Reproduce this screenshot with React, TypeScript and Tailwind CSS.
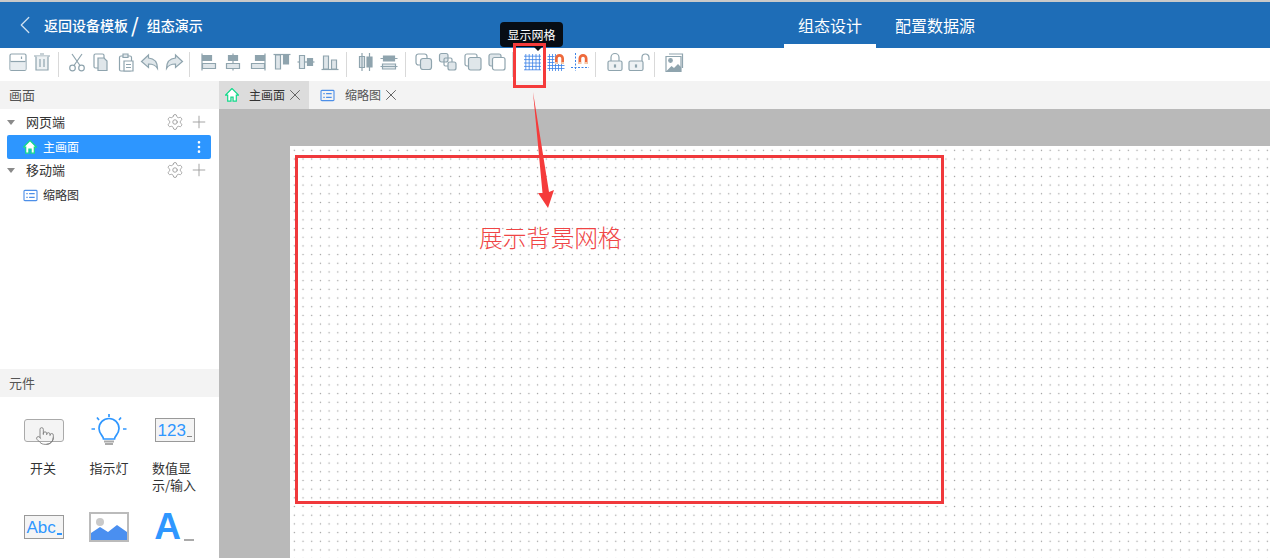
import { ChevronLeft, MoreVertical, Plus, Pointer, Settings, X } from 'lucide-react';
import type { ReactNode } from 'react';

const LINE = '#8fa4ae';
const FILL = '#dfe6ea';
const BLUE = '#3b82e6';

function Ico({ children }: { children: ReactNode }) {
  return (
    <svg viewBox="0 0 24 24" width="24" height="24" fill="none" stroke={LINE} strokeWidth="1.2">
      {children}
    </svg>
  );
}

const tools: Record<string, ReactNode> = {
  save: <><rect x="4" y="4" width="16" height="16.500" rx="1.500" fill="#fff" /><path d="M4.500 11.500h15v8.500h-15z" fill="#e8edf0" stroke="none" /><path d="M4.500 11.500h15" /><path d="M15.500 6.500v2.500" /></>,
  trash: <><path d="M4 6h16M10 4h4" /><path d="M6 6.500v13.500h12v-13.500" fill="#eef2f4" /><path d="M10 9v8M14 9v8" /></>,
  cut: <><circle cx="7.500" cy="18" r="2.800" /><circle cx="16.500" cy="18" r="2.800" /><path d="M9 15.500L17 4M15 15.500L7 4" /></>,
  copy: <><rect x="5" y="4" width="10" height="14" rx="1.500" fill="#fff" /><path d="M9 8h6l3 3v9.500H9z" fill={FILL} /></>,
  paste: <><rect x="5.500" y="6" width="12" height="15" rx="1.500" fill="#fff" /><path d="M9 4h5v3.500H9z" fill={FILL} /><path d="M10 11h9v10h-9z" fill="#fff" /><path d="M12 14.500h5M12 17.500h5" /></>,
  undo: <path d="M10.500 5L3.500 11.500l7 6v-3.500c4 0 7 1 9 4.500 0-6-3-10-9-10.500z" fill={FILL} />,
  redo: <path d="M13.500 5l7 6.500-7 6v-3.500c-4 0-7 1-9 4.500 0-6 3-10 9-10.500z" fill={FILL} />,
  alignL: <><path d="M5 3.500v17" /><path d="M5.500 5.500h9v5h-9z" fill={LINE} /><path d="M5.500 13.500h13v5h-13z" fill={FILL} /></>,
  alignC: <><path d="M12 3.500v17" /><path d="M7.500 5.500h9v5h-9z" fill={LINE} /><path d="M5.500 13.500h13v5h-13z" fill={FILL} /></>,
  alignR: <><path d="M19 3.500v17" /><path d="M9.500 5.500h9v5h-9z" fill={LINE} /><path d="M5.500 13.500h13v5h-13z" fill={FILL} /></>,
  top: <><path d="M3.500 4.500h17" /><path d="M5.500 5v14h5V5z" fill={FILL} /><path d="M13.500 5v9h5V5z" fill={LINE} /></>,
  midV: <><path d="M3.500 12h17" /><path d="M5.500 5.500v13h5v-13z" fill={FILL} /><path d="M13.500 8.500v7h5v-7z" fill={LINE} /></>,
  bottom: <><path d="M3.500 19.500h17" /><path d="M5.500 6v13h5V6z" fill={FILL} /><path d="M13.500 10v9h5v-9z" fill={FILL} /></>,
  distH: <><path d="M6.500 6.500v11h5v-11z" fill={FILL} /><path d="M14 7v10h5V7z" fill={LINE} /><path d="M9 3v18M16.500 3v18" /></>,
  distV: <><path d="M6.500 6h11v5h-11z" fill={LINE} /><path d="M5.500 14h13v5h-13z" fill={FILL} /><path d="M3.500 8.500h17M3.500 16.500h17" /></>,
  front: <><rect x="4" y="4" width="11" height="11" rx="2.500" /><rect x="8.500" y="8.500" width="11" height="11" rx="2.500" fill={FILL} /></>,
  back: <><rect x="3.500" y="3.500" width="8.500" height="8.500" rx="2" fill={FILL} /><rect x="8" y="8" width="8" height="8" rx="1.500" /><rect x="12" y="12" width="8" height="8" rx="2" fill={FILL} /></>,
  up: <><rect x="4" y="4" width="12" height="12" rx="2" /><rect x="7.500" y="7.500" width="12.500" height="12.500" rx="2" fill={FILL} /></>,
  down: <><rect x="4" y="4" width="12" height="12" rx="2" fill={FILL} /><rect x="7.500" y="7.500" width="12.500" height="12.500" rx="2" fill="#fff" /></>,
  lock: <><path d="M8 11V7.500a4 4 0 018 0V11" /><rect x="5" y="11" width="14" height="9.500" rx="1.500" fill="#eef2f4" /><path d="M11.500 15h1v2h-1z" fill={LINE} /></>,
  unlock: <><path d="M15 11V7.500a3.500 3.500 0 017 0V10" /><rect x="2" y="11" width="14" height="9.500" rx="1.500" fill="#eef2f4" /><path d="M8.500 15h1v2h-1z" fill={LINE} /></>,
  image: <><path d="M7 4h13.500v14" /><path d="M4 6.500h15v15H4z" fill="#fff" /><circle cx="8.500" cy="10.500" r="1.800" fill={LINE} /><path d="M4.500 21l5-5 2.500 2 4-4 3 3v4z" fill={LINE} stroke="none" /></>,
};

function GridIcon() {
  return (
    <svg viewBox="0 0 24 24" width="24" height="24" fill="none" stroke={BLUE} strokeWidth="0.800">
      <path d="M5.800 4v16M9.200 4v16M12.600 4v16M16 4v16M19.400 4v16M4 6.200h17M4 9.600h17M4 13h17M4 16.400h17M4 19.800h17" />
    </svg>
  );
}

function GridMagnet() {
  return (
    <svg viewBox="0 0 24 24" width="24" height="24" fill="none">
      <path d="M5.500 4v17M8.500 4v17M11.500 4v17M14.500 14v7M17.500 14v7M3.500 6.500h7M3.500 9.500h7M3.500 12.500h7M3.500 15.500h17M3.500 18.500h17" stroke={BLUE} strokeWidth="0.800" />
      <path d="M11 14V8.500a4.500 4.500 0 019 0V14h-2.700V8.500a1.800 1.800 0 00-3.600 0V14z" fill="#ee6a3c" />
      <path d="M11 12h2.700v2H11zM17.300 12H20v2h-2.700z" fill="#f4c9a8" />
    </svg>
  );
}

function LineMagnet() {
  return (
    <svg viewBox="0 0 24 24" width="24" height="24" fill="none">
      <path d="M7.500 3v18M3 17.500h18" stroke={BLUE} strokeWidth="1" strokeDasharray="2 1.500" />
      <path d="M10.500 14V8.500a4.500 4.500 0 019 0V14h-2.700V8.500a1.800 1.800 0 00-3.600 0V14z" fill="#ee6a3c" />
      <path d="M10.500 12h2.700v2h-2.700zM16.800 12h2.700v2h-2.700z" fill="#f4c9a8" />
    </svg>
  );
}

function Tool({ name, children }: { name?: string; children?: ReactNode }) {
  return (
    <div className="-mt-[5px] flex h-[24px] w-[24.300px] shrink-0 items-center justify-center">
      {name ? <Ico>{tools[name]}</Ico> : children}
    </div>
  );
}

function Sep() {
  return <div className="ml-[3px] mr-[6.400px] h-[25px] w-px shrink-0 bg-[#d9d9d9]" />;
}

function HomeIcon({ size = 16 }: { size?: number }) {
  return (
    <svg viewBox="1 1 14 14" width={size} height={size} fill="#ffffff" stroke="#12d98a" strokeWidth="1.200">
      <path d="M8 1.500L1.500 8.200h2.200v6h3.200v-4h2.200v4h3.200v-6h2.200z" />
    </svg>
  );
}

function ListIcon() {
  return (
    <svg viewBox="0 0 16 14" width="15" height="13" fill="none" stroke="#4d8fe8" strokeWidth="1.200">
      <rect x="1" y="1.500" width="14" height="11" rx="1" />
      <path d="M3.500 5h1.500M3.500 9h1.500M6.500 5h6M6.500 9h6" />
    </svg>
  );
}

function TreeGroup({ label }: { label: string }) {
  return (
    <div className="flex h-[24px] items-center">
      <div className="ml-[7px] h-0 w-0 border-x-[4px] border-t-[5px] border-x-transparent border-t-[#8a8a8a]" />
      <span className="ml-[11px] text-[13px] text-[#333]">{label}</span>
      <div className="ml-auto mr-[10px] flex items-center gap-[5px] text-[#9c9c9c]">
        <Settings size={18} strokeWidth={1.200} />
        <Plus size={20} strokeWidth={1.100} />
      </div>
    </div>
  );
}

function Bulb() {
  return (
    <svg className="mt-[4px]" viewBox="0 0 36 36" width="36" height="36" fill="none" stroke="#2f97ff" strokeWidth="1.700">
      <path d="M12.500 25c0-3-4.500-5-4.500-10.500a10 10 0 0120 0c0 5.500-4.500 7.500-4.500 10.500z" />
      <path d="M13 27.500h10M14 30h8" stroke="#aaa" strokeWidth="2" />
      <path d="M18 0v3M6 3.500l2 2.500M30 3.500l-2 2.500M0.500 15h3.500M32 15h3.500" />
    </svg>
  );
}

function Widget({ icon, label }: { icon: ReactNode; label?: string }) {
  return (
    <div className="flex flex-col items-center">
      <div className="flex h-[40px] w-full items-center justify-center">{icon}</div>
      {label && (
        <div className="mt-[9px] w-fit max-w-[46px] text-[13px] leading-[17px] text-[#333]">{label}</div>
      )}
    </div>
  );
}

export default function App() {
  return (
    <div className="relative h-[558px] w-[1270px] overflow-hidden bg-white font-['Noto_Sans_CJK_SC','Liberation_Sans',sans-serif]">
      <header className="flex h-[48px] items-center border-t-2 border-[#c9c9c9] bg-[#1e6db7] text-white">
        <div className="flex w-[784px] shrink-0 items-center">
          <ChevronLeft size={30} strokeWidth={1} className="ml-[10px] text-[#cfe0f0]" />
          <span className="ml-[4px] text-[14px] font-medium">返回设备模板</span>
          <span className="ml-[3px] text-[20px] font-medium leading-[20px]">/</span>
          <span className="ml-[8px] text-[14px] font-medium">组态演示</span>
        </div>
        <div className="relative flex h-full w-[92px] items-center justify-center text-[16px]">
          组态设计
          <div className="absolute bottom-0 left-0 h-[4px] w-full bg-white" />
        </div>
        <div className="ml-[19px] text-[16px]">配置数据源</div>
      </header>

      <div className="flex h-[33px] items-center pl-[6px]">
        <Tool name="save" />
        <Tool name="trash" />
        <Sep />
        <Tool name="cut" />
        <Tool name="copy" />
        <Tool name="paste" />
        <Tool name="undo" />
        <Tool name="redo" />
        <Sep />
        <Tool name="alignL" />
        <Tool name="alignC" />
        <Tool name="alignR" />
        <Tool name="top" />
        <Tool name="midV" />
        <Tool name="bottom" />
        <Sep />
        <Tool name="distH" />
        <Tool name="distV" />
        <Sep />
        <Tool name="front" />
        <Tool name="back" />
        <Tool name="up" />
        <Tool name="down" />
        <Sep />
        <Tool><GridIcon /></Tool>
        <Tool><GridMagnet /></Tool>
        <Tool><LineMagnet /></Tool>
        <Sep />
        <Tool name="lock" />
        <Tool name="unlock" />
        <Sep />
        <Tool name="image" />
      </div>

      <div className="flex h-[477px]">
        <aside className="flex w-[219px] shrink-0 flex-col overflow-hidden">
          <div className="flex h-[28px] shrink-0 items-center bg-[#f3f3f3] pl-[9px] text-[13px] text-[#555]">画面</div>
          <div className="h-[260px] shrink-0 pt-[1px]">
            <TreeGroup label="网页端" />
            <div className="-mb-[1px] ml-[7px] mr-[8px] mt-[1px] flex h-[24px] items-center rounded-[2px] bg-[#2d96ff] pl-[16px] pr-[4px] text-[12px] text-white">
              <HomeIcon size={14} />
              <span className="ml-[6px]">主画面</span>
              <MoreVertical size={16} strokeWidth={2} className="ml-auto" />
            </div>
            <TreeGroup label="移动端" />
            <div className="flex h-[26px] items-center pl-[23px] text-[12px] text-[#333]">
              <ListIcon />
              <span className="ml-[5px]">缩略图</span>
            </div>
          </div>
          <div className="flex h-[28px] shrink-0 items-center bg-[#f3f3f3] pl-[9px] text-[13px] text-[#555]">元件</div>
          <div className="grid grid-cols-[66px_66px_66px] content-start gap-y-[14px] pl-[10px] pt-[13px]">
            <Widget
              label="开关"
              icon={
                <div className="relative ml-[1px] h-[23px] w-[40px] rounded-[3px] border border-[#aaa] bg-[#f4f4f4]">
                  <Pointer size={20} strokeWidth={1} className="absolute left-[10px] top-[6px] text-[#777]" />
                </div>
              }
            />
            <Widget label="指示灯" icon={<Bulb />} />
            <Widget
              label="数值显示/输入"
              icon={
                <div className="-ml-[1px] flex h-[24px] w-[40px] items-end border border-[#999] bg-[#f4f4f4] pl-[2px] font-['Liberation_Sans',sans-serif] text-[17px] leading-[21px] text-[#2f97ff]">
                  123<span className="mb-[4px] ml-[1px] h-[1px] w-[5px] bg-[#888]" />
                </div>
              }
            />
            <Widget
              icon={
                <div className="ml-[1px] flex h-[24px] w-[40px] items-end border border-[#999] bg-[#f4f4f4] pl-[2px] font-['Liberation_Sans',sans-serif] text-[17px] leading-[21px] text-[#2f97ff]">
                  Abc<span className="mb-[3px] ml-[1px] h-[2px] w-[5px] bg-[#2f97ff]" />
                </div>
              }
            />
            <Widget
              icon={
                <svg viewBox="0 0 40 30" width="40" height="30">
                  <rect x="1" y="1" width="38" height="28" fill="#fff" stroke="#bbb" strokeWidth="2" />
                  <circle cx="11" cy="10" r="4" fill="#c9c9c9" />
                  <path d="M2 28v-7l9-6 8 5 9-7 10 7v8z" fill="#4a8ff0" />
                </svg>
              }
            />
            <Widget
              icon={
                <div className="-ml-[2px] flex items-end font-['Liberation_Sans',sans-serif] text-[37px] font-bold leading-[30px] text-[#2f97ff]">
                  A<span className="mb-[1px] ml-[3px] h-[2px] w-[10px] bg-[#aaa]" />
                </div>
              }
            />
          </div>
        </aside>

        <main className="flex min-w-0 flex-1 flex-col">
          <div className="flex h-[28px] shrink-0 items-center bg-[#f3f3f3] text-[12px] text-[#333]">
            <div className="flex h-full w-[90px] items-center bg-[#dcdcdc] pl-[6px]">
              <HomeIcon size={14} />
              <span className="ml-[10px]">主画面</span>
              <X size={18} strokeWidth={1.200} className="ml-[1px] text-[#555]" />
            </div>
            <div className="flex h-full items-center pl-[11px]">
              <ListIcon />
              <span className="ml-[10px] text-[#555]">缩略图</span>
              <X size={18} strokeWidth={1.200} className="ml-[1px] text-[#555]" />
            </div>
          </div>
          <div className="flex-1 bg-[#b9b9b9] pl-[71px] pt-[37px]">
            <div className="h-full bg-white bg-[radial-gradient(circle,#999999_0.75px,transparent_1px)] bg-[size:8.700px_8.700px]" />
          </div>
        </main>
      </div>

      {/* tooltip and red annotation on top of the page */}
      <div className="absolute left-[500px] top-[22px] flex h-[25px] w-[63px] items-center justify-center rounded-[4px] bg-[#070d14] text-[12px] text-white">
        显示网格
      </div>
      <div className="absolute left-[533px] top-[46px] h-0 w-0 border-x-[5px] border-t-[5px] border-x-transparent border-t-[#070d14]" />
      <div className="absolute left-[513px] top-[43px] h-[45px] w-[33px] border-[3px] border-[#f53b3b]" />
      <div className="absolute left-[295px] top-[155px] h-[349px] w-[649px] border-[3px] border-[#f0393c]" />
      <svg className="absolute left-[530px] top-[90px]" width="30" height="122" viewBox="0 0 30 122">
        <path d="M3 2L12.500 103 8 103 18 118 24 100 19 102z" fill="#f53b3b" />
      </svg>
      <div className="absolute left-[479px] top-[220px] text-[23.800px] font-light leading-[34px] text-[#f04545]">展示背景网格</div>
    </div>
  );
}
